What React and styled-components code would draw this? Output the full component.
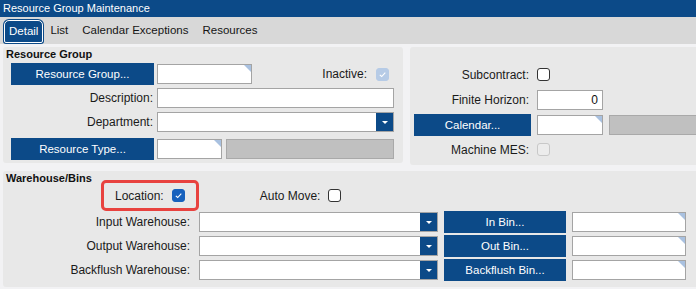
import React from 'react';
import styled, { createGlobalStyle, css } from 'styled-components';

const BLUE = '#0c4a88';
const FONT = "'Liberation Sans', Arial, sans-serif";

const Global = createGlobalStyle`
    * { box-sizing: border-box; }
    body {
        margin: 0;
        background: #f2f2f4;
        font-family: ${FONT};
        overflow: hidden;
    }
`;

export default () => {
    return (
        <Window>
            <Global />
            <TitleBar>Resource Group Maintenance</TitleBar>
            <TabBar>
                <Tab $active>Detail</Tab>
                <Tab>List</Tab>
                <Tab>Calendar Exceptions</Tab>
                <Tab>Resources</Tab>
            </TabBar>
            <Body>
                <TopRow>
                    <Panel $w={400} $h={116}>
                        <SectionTitle>Resource Group</SectionTitle>
                        <Rows $pad={8}>
                            <Row>
                                <Button $w={143}>Resource Group...</Button>
                                <Field $w={95} $ml={3} $corner />
                                <Label $w={115}>Inactive:</Label>
                                <Check $kind="disabledChecked" $ml={9} />
                            </Row>
                            <Row>
                                <Label $w={143} $pr={1}>Description:</Label>
                                <Field $w={237} $ml={3} />
                            </Row>
                            <Row>
                                <Label $w={143} $pr={1}>Department:</Label>
                                <Select w={237} ml={3} />
                            </Row>
                            <Row $mt={3}>
                                <Button $w={143}>Resource Type...</Button>
                                <Field $w={65} $ml={3} $corner />
                                <ReadOnly $w={168} $ml={4} />
                            </Row>
                        </Rows>
                    </Panel>
                    <Panel $w={300} $h={118}>
                        <Rows $pad={4} $top={15}>
                            <Row $h={25}>
                                <Label $w={117} $pr={2}>Subcontract:</Label>
                                <Check $kind="off" $ml={6} />
                            </Row>
                            <Row $h={25}>
                                <Label $w={117} $pr={2}>Finite Horizon:</Label>
                                <Field $w={66} $ml={6} $align="right">0</Field>
                            </Row>
                            <Row $h={25}>
                                <Button $w={117}>Calendar...</Button>
                                <Field $w={66} $ml={6} $corner />
                                <ReadOnly $w={100} $ml={6} />
                            </Row>
                            <Row $h={25}>
                                <Label $w={117} $pr={2}>Machine MES:</Label>
                                <Check $kind="disabled" $ml={6} />
                            </Row>
                        </Rows>
                    </Panel>
                </TopRow>
                <Panel $w={700} $h={116}>
                    <SectionTitle $h={9}>Warehouse/Bins</SectionTitle>
                    <LocationRow>
                        <Highlight>
                            <Label>Location:</Label>
                            <Check $kind="checked" $ml={8} />
                        </Highlight>
                        <Label $ml={61}>Auto Move:</Label>
                        <Check $kind="off" $ml={8} />
                    </LocationRow>
                    <Rows $pad={8} $top={0}>
                        {[
                            ['Input Warehouse:', 'In Bin...'],
                            ['Output Warehouse:', 'Out Bin...'],
                            ['Backflush Warehouse:', 'Backflush Bin...'],
                        ].map(([label, bin]) => (
                            <Row key={label}>
                                <Label $w={180} $pr={1}>{label}</Label>
                                <Select w={239} ml={8} />
                                <Button $w={122} $ml={6}>{bin}</Button>
                                <Field $w={114} $ml={6} $corner />
                            </Row>
                        ))}
                    </Rows>
                </Panel>
            </Body>
        </Window>
    );
};

const Select = ({ w, ml }) => (
    <Field $w={w} $ml={ml} $flex>
        <DropButton />
    </Field>
);

const Check = ({ $kind, $ml }) => (
    <CheckBox $kind={$kind} $ml={$ml}>
        {($kind === 'checked' || $kind === 'disabledChecked') && (
            <svg width="9" height="9" viewBox="0 0 9 9">
                <path d="M1.8 4.8 L3.7 6.5 L7.3 2.6" fill="none" stroke="#fff" strokeWidth="1.1" />
            </svg>
        )}
    </CheckBox>
);

const Window = styled.div`
    width: 696px;
    height: 289px;
    overflow: hidden;
    background: #f2f2f4;
`;

const TitleBar = styled.div`
    height: 17px;
    line-height: 17px;
    padding-left: 3px;
    background: ${BLUE};
    color: #fff;
    font-size: 11px;
    white-space: nowrap;
`;

const TabBar = styled.div`
    height: 27px;
    display: flex;
    align-items: flex-end;
    padding: 0 0 1px 4px;
    background: #d8d8d8;
`;

const Tab = styled.div`
    height: 23px;
    line-height: 21px;
    font-size: 11.5px;
    white-space: nowrap;
    color: #151515;
    padding: 0 7px;
    ${({ $active }) =>
        $active &&
        css`
            padding: 0 4px;
            background: ${BLUE};
            color: #fff;
            border: 1px solid #fff;
            border-radius: 5px 5px 2px 2px;
            box-shadow: 0 0 0 1px ${BLUE};
        `}
`;

const Body = styled.div`
    display: flex;
    flex-direction: column;
    gap: 6px;
    padding: 3px 0 0 3px;
`;

const TopRow = styled.div`
    display: flex;
    align-items: flex-start;
    gap: 7px;
`;

const Panel = styled.div`
    flex: none;
    width: ${({ $w }) => $w}px;
    height: ${({ $h }) => $h}px;
    background: #e8e8e8;
    border-radius: 3px;
`;

const SectionTitle = styled.div`
    height: ${({ $h = 15 }) => $h}px;
    line-height: 15px;
    padding-left: 3px;
    font-size: 11px;
    font-weight: bold;
    color: #111;
`;

const Rows = styled.div`
    display: flex;
    flex-direction: column;
    padding: ${({ $top = 0, $pad = 0 }) => `${$top}px 0 0 ${$pad}px`};
`;

const Row = styled.div`
    display: flex;
    align-items: center;
    height: ${({ $h = 24 }) => $h}px;
    margin-top: ${({ $mt = 0 }) => $mt}px;
`;

const LocationRow = styled.div`
    display: flex;
    align-items: center;
    height: 31px;
    margin-bottom: -1px;
    padding-left: 98px;
`;

const Highlight = styled.div`
    display: flex;
    align-items: center;
    height: 31px;
    padding: 0 11px;
    border: 3px solid #e8423f;
    border-radius: 5px;
`;

const Label = styled.div`
    flex: none;
    ${({ $w }) => $w && `width: ${$w}px;`}
    margin-left: ${({ $ml = 0 }) => $ml}px;
    padding-right: ${({ $pr = 0 }) => $pr}px;
    text-align: right;
    font-size: 12px;
    color: #1a1a1a;
    white-space: nowrap;
`;

const Button = styled.div`
    flex: none;
    width: ${({ $w }) => $w}px;
    height: 22px;
    margin-left: ${({ $ml = 0 }) => $ml}px;
    background: ${BLUE};
    color: #fff;
    font-size: 11.5px;
    line-height: 22px;
    text-align: center;
    white-space: nowrap;
`;

const Field = styled.div`
    flex: none;
    position: relative;
    width: ${({ $w }) => $w}px;
    height: 20px;
    margin-left: ${({ $ml = 0 }) => $ml}px;
    background: #fff;
    border: 1px solid #a4a4a4;
    font-size: 12px;
    line-height: 18px;
    color: #111;
    text-align: ${({ $align = 'left' }) => $align};
    padding: 0 4px;
    ${({ $flex }) =>
        $flex &&
        css`
            display: flex;
            justify-content: flex-end;
            padding: 0;
        `}
    ${({ $corner }) =>
        $corner &&
        css`
            &::after {
                content: '';
                position: absolute;
                top: 0;
                right: 0;
                border-top: 7px solid #a9c1e0;
                border-left: 7px solid transparent;
            }
        `}
`;

const DropButton = styled.div`
    width: 17px;
    height: 100%;
    background: ${BLUE};
    display: flex;
    align-items: center;
    justify-content: center;

    &::before {
        content: '';
        border-top: 3px solid #fff;
        border-left: 3px solid transparent;
        border-right: 3px solid transparent;
    }
`;

const ReadOnly = styled.div`
    flex: none;
    width: ${({ $w }) => $w}px;
    height: 20px;
    margin-left: ${({ $ml = 0 }) => $ml}px;
    background: #c0c0c0;
    border: 1px solid #a9a9a9;
`;

const CheckBox = styled.span`
    flex: none;
    display: flex;
    align-items: center;
    justify-content: center;
    width: 13px;
    height: 13px;
    margin-left: ${({ $ml = 0 }) => $ml}px;
    border-radius: 3px;
    ${({ $kind }) =>
        ($kind === 'checked' && `background: #1761bd; border: 1px solid #1761bd;`) ||
        ($kind === 'disabledChecked' && `background: #b6cbe6; border: 1px solid #b6cbe6;`) ||
        ($kind === 'disabled' && `background: #ececec; border: 1px solid #c8c8c8;`) ||
        `background: #fff; border: 1px solid #333;`}
`;
